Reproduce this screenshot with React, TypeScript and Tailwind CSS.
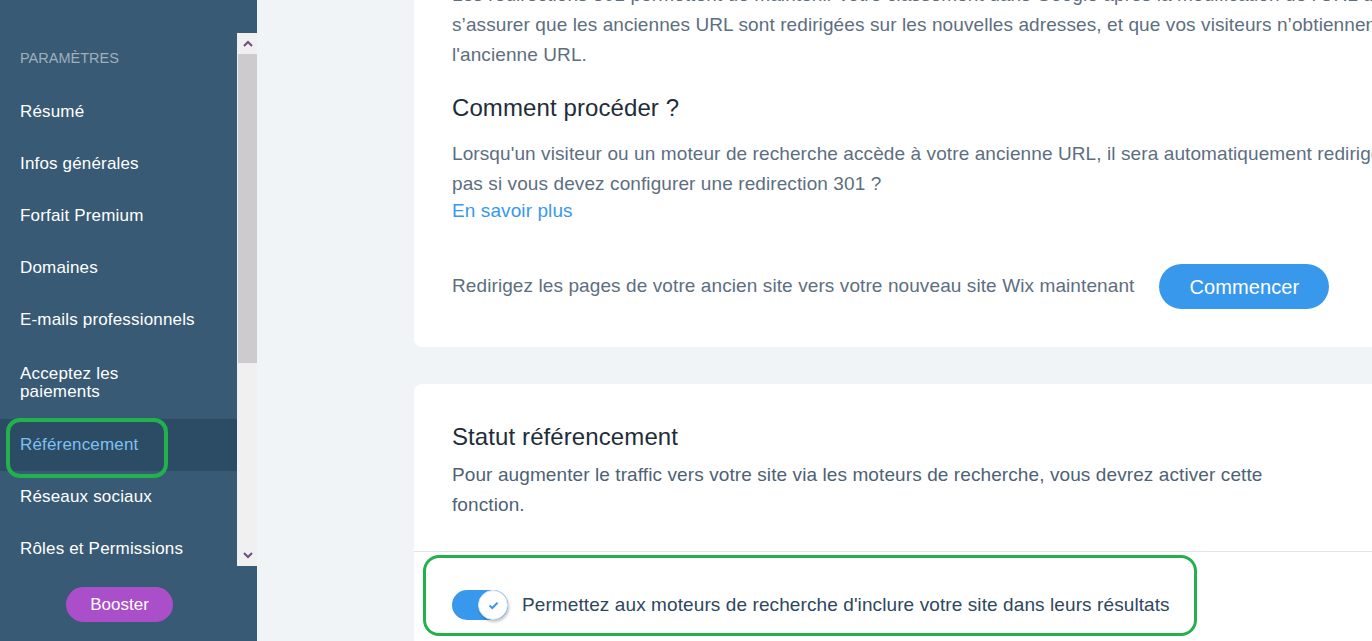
const navItems = [
  { label: "Résumé" },
  { label: "Infos générales" },
  { label: "Forfait Premium" },
  { label: "Domaines" },
  { label: "E-mails professionnels" },
  { label: "Acceptez les\npaiements", tall: true },
  { label: "Référencement", active: true },
  { label: "Réseaux sociaux" },
  { label: "Rôles et Permissions" },
]

function Chevron({ up }: { up?: boolean }) {
  return (
    <svg width="10" height="7" viewBox="0 0 10 7" className={up ? "" : "rotate-180"}>
      <path d="M1 6 L5 2 L9 6" fill="none" stroke="#6b4f7e" strokeWidth="2" />
    </svg>
  )
}

function Sidebar() {
  return (
    <aside className="flex w-[257px] shrink-0 flex-col bg-[#385a74]">
      <div className="mt-[33px] flex h-[533px]">
        <nav className="flex-1 overflow-hidden">
          <div className="h-[53px] pl-5 pt-[16px] text-[14.5px] leading-[18px] text-[#a0afbd]">PARAMÈTRES</div>
          {navItems.map((item) => (
            <div
              key={item.label}
              className={`flex items-center whitespace-pre-line pl-5 text-[17px] leading-[18px] tracking-[0.01em] ${
                item.tall ? "h-[73px]" : "h-[52px]"
              } ${item.active ? "bg-[#2c4b65] text-[#7fc0f2]" : "text-white"}`}
            >
              {item.label}
            </div>
          ))}
        </nav>
        <div className="flex w-[20px] flex-col bg-[#f0f0f0] pl-[1px]">
          <div className="flex h-[21px] items-center justify-center">
            <Chevron up />
          </div>
          <div className="h-[309px] bg-[#cdcbcd]" />
          <div className="flex-1" />
          <div className="flex h-[22px] items-center justify-center">
            <Chevron />
          </div>
        </div>
      </div>
      <button className="ml-[66px] mt-[21px] h-[35px] w-[107px] rounded-full bg-[#aa4fc9] text-[17px] text-white">
        Booster
      </button>
    </aside>
  )
}

function Toggle() {
  return (
    <div className="relative h-[30px] w-[56px] shrink-0 rounded-full bg-[#3899ec]">
      <div className="absolute right-0 top-0 flex h-[30px] w-[30px] items-center justify-center rounded-full border border-[#d3e6f8] bg-white shadow-[1px_2px_3px_rgba(0,0,0,0.25)]">
        <svg width="11" height="9" viewBox="0 0 11 9">
          <path d="M1.5 4.5 L4.3 7 L9.5 1.8" fill="none" stroke="#3899ec" strokeWidth="2" />
        </svg>
      </div>
    </div>
  )
}

export default function App() {
  return (
    <div className="relative flex h-[641px] w-[1372px] overflow-hidden bg-[#f0f4f7] font-['Liberation_Sans',Arial,sans-serif]">
      <Sidebar />

      <main className="flex-1 overflow-hidden pl-[157px]">
        <div className="-mt-[60px] tracking-[0.006em]">
          {/* Redirection card */}
          <section className="w-[1200px] rounded-lg bg-white pb-[38px] pl-[38px] pt-[40px]">
            <div className="whitespace-nowrap text-[19px] leading-[30px] text-[#5d6e7f]">
              <div>Les redirections 301 permettent de maintenir votre classement dans Google après la modification de l'URL de votre site. Elles permettent de</div>
              <div>s’assurer que les anciennes URL sont redirigées sur les nouvelles adresses, et que vos visiteurs n’obtiennent pas d'erreur en consultant</div>
              <div>l'ancienne URL.</div>
            </div>
            <h2 className="mt-[23px] text-[24px] leading-[30px] text-[#1f2d3a]">Comment procéder ?</h2>
            <div className="mt-[16px] whitespace-nowrap text-[19px] leading-[30px] text-[#5d6e7f]">
              <div>Lorsqu'un visiteur ou un moteur de recherche accède à votre ancienne URL, il sera automatiquement redirigé vers la nouvelle. Vous ne savez</div>
              <div>pas si vous devez configurer une redirection 301 ?</div>
            </div>
            <a className="block text-[19px] leading-[24px] text-[#3899ec]">En savoir plus</a>
            <div className="mt-[41px] flex h-[45px] items-center">
              <span className="text-[19px] text-[#5d6e7f]">Redirigez les pages de votre ancien site vers votre nouveau site Wix maintenant</span>
              <button className="ml-[25px] h-[45px] w-[170px] rounded-full bg-[#3899ec] text-[20px] text-white">
                Commencer
              </button>
            </div>
          </section>

          {/* SEO status card */}
          <section className="mt-[37px] w-[1200px] rounded-lg bg-white">
            <div className="border-b border-[#dfe5ea] pb-[31px] pl-[38px] pt-[38px]">
              <h2 className="text-[24px] leading-[30px] text-[#1f2d3a]">Statut référencement</h2>
              <div className="mt-[8px] text-[19px] leading-[30px] text-[#4d6275]">
                <div>Pour augmenter le traffic vers votre site via les moteurs de recherche, vous devrez activer cette</div>
                <div>fonction.</div>
              </div>
            </div>
            <div className="flex items-center gap-[14px] pb-[40px] pl-[38px] pt-[38px]">
              <Toggle />
              <span className="text-[19px] leading-[30px] text-[#2e475c]">
                Permettez aux moteurs de recherche d'inclure votre site dans leurs résultats
              </span>
            </div>
          </section>
        </div>
      </main>

      {/* green annotations */}
      <div className="pointer-events-none absolute left-[6px] top-[418px] h-[60px] w-[162px] rounded-[14px] border-[4px] border-[#22b14c]" />
      <div className="pointer-events-none absolute left-[423px] top-[555px] h-[81px] w-[774px] rounded-[16px] border-[3px] border-[#22b14c]" />
    </div>
  )
}
